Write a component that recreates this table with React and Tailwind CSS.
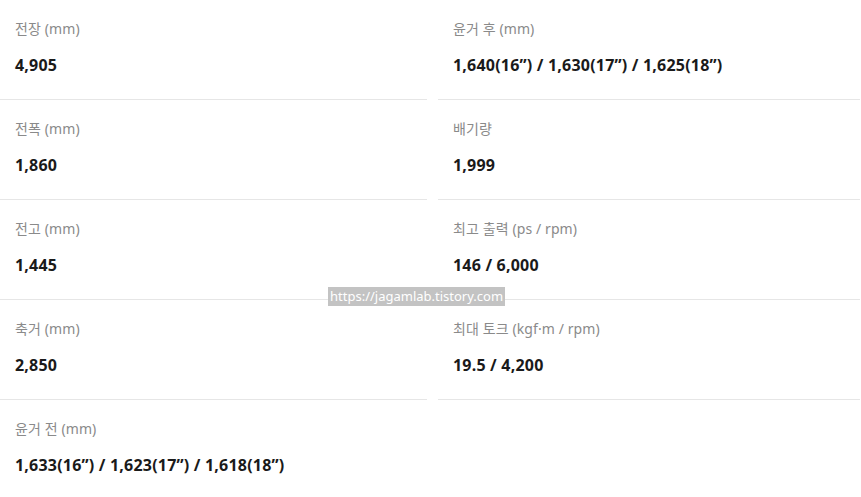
import React from "react";

const left = [
  ["전장 (mm)", "4,905"],
  ["전폭 (mm)", "1,860"],
  ["전고 (mm)", "1,445"],
  ["축거 (mm)", "2,850"],
  ["윤거 전 (mm)", "1,633(16”) / 1,623(17”) / 1,618(18”)"],
];
const right = [
  ["윤거 후 (mm)", "1,640(16”) / 1,630(17”) / 1,625(18”)"],
  ["배기량", "1,999"],
  ["최고 출력 (ps / rpm)", "146 / 6,000"],
  ["최대 토크 (kgf·m / rpm)", "19.5 / 4,200"],
];

function Item({ label, value, border }) {
  return (
    <div className={"h-[100px] px-[15px] pt-[18px] " + (border ? "border-b border-[#e6e6e6]" : "")}>
      <div className="text-[14px] leading-[22px] text-[#8a8a8a] tracking-[0.1px]">{label}</div>
      <div className="mt-[14px] text-[16px] leading-[22px] font-bold text-[#1a1a1a] tracking-[0.2px]">{value}</div>
    </div>
  );
}

export default function App() {
  return (
    <div
      className="relative w-[861px] h-[497px] bg-white overflow-hidden"
      style={{ fontFamily: '"Noto Sans", "Noto Sans CJK KR", sans-serif' }}
    >
      <div className="flex gap-[11px]">
        <div className="w-[427px] flex flex-col">
          {left.map(([l, v], i) => (
            <Item key={l} label={l} value={v} border={i < left.length - 1} />
          ))}
        </div>
        <div className="w-[422px] flex flex-col">
          {right.map(([l, v]) => (
            <Item key={l} label={l} value={v} border />
          ))}
        </div>
      </div>
      <div className="absolute left-[328px] top-[287px] h-[19px] px-[2px] bg-[#c3c3c3] text-white text-[13px] leading-[19px]">
        https://jagamlab.tistory.com
      </div>
    </div>
  );
}
